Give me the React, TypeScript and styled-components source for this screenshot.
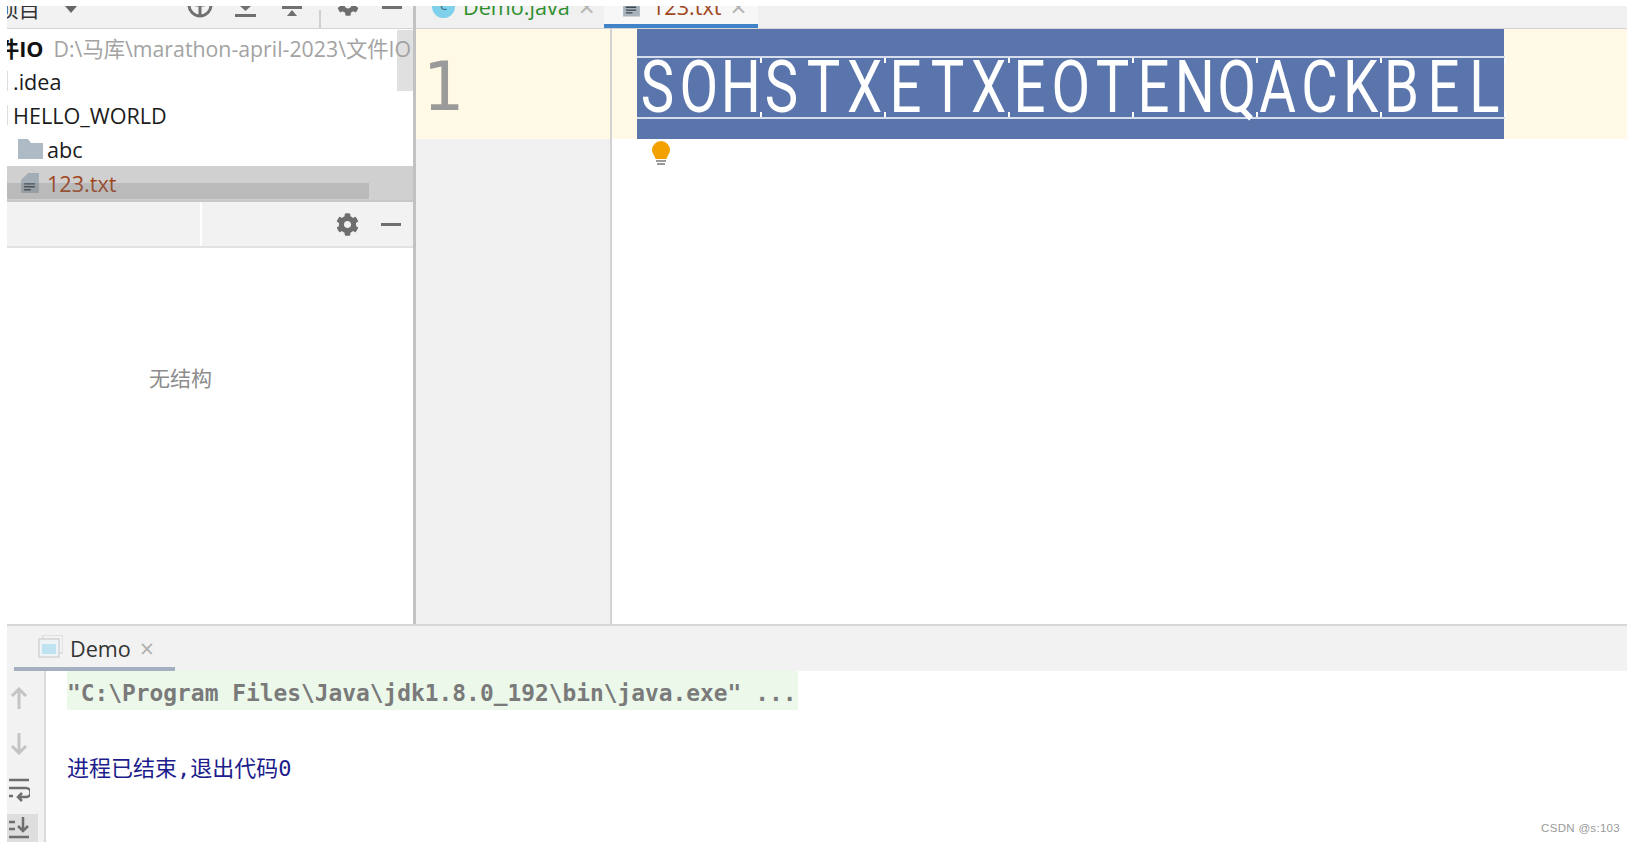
import React from "react";
import styled, { createGlobalStyle } from "styled-components";
import { FaCog } from "react-icons/fa";

const Global = createGlobalStyle`
  html, body { margin: 0; padding: 0; background: #fff; }
  #root { width: 1627px; height: 842px; overflow: hidden; }
`;
const UI = `"Open Sans", "Noto Sans", "Noto Sans CJK SC", sans-serif`;
const Page = styled.div`
  position: relative; box-sizing: border-box; width: 1627px; height: 842px; padding: 6px 0 0 7px;
  display: flex; flex-direction: column; overflow: hidden; background: #fff; font-family: ${UI};
`;
const Top = styled.div`display: flex; height: 618px; flex: none;`;
const Sidebar = styled.aside`position: relative; width: 406px; flex: none; display: flex; flex-direction: column; overflow: hidden;`;
const Splitter = styled.div`width: 3px; flex: none; background: #c2c2c2;`;
const ProjectBar = styled.div`
  height: 23px; flex: none; box-sizing: border-box; background: #f2f2f2; border-bottom: 1px solid #d4d4d4;
  display: flex; align-items: flex-end; overflow: hidden; position: relative; color: #555;
`;
const ProjectTitle = styled.span`font-size: 21.6px; line-height: 26px; margin: 0 0 6px -10px; color: #333; white-space: nowrap;`;
const Caret = styled.span`width:0;height:0;border-left:6px solid transparent;border-right:6px solid transparent;border-top:7px solid #666;margin:0 0 15px 25px;`;
const BarIcons = styled.div`position: absolute; right: 0; bottom: 0; left: 0; height: 22px;`;
const BarIcon = styled.svg<{ $x: number; $b: number }>`position: absolute; left: ${p => p.$x}px; bottom: ${p => p.$b}px; overflow: visible;`;
const BarCog = styled(FaCog)`position: absolute; left: 330px; bottom: 12px;`;
const Tree = styled.div`display: flex; flex-direction: column; position: relative; padding-top: 1px; flex: none;`;
const Row = styled.div<{ $sel?: boolean }>`
  height: 34px; flex: none; display: flex; align-items: center; font-size: 21.6px; white-space: nowrap; color: #1b1b1b;
  background: ${p => (p.$sel ? "#d0d0d0" : "#fff")};
`;
const RootName = styled.b`margin-left: -31px; color: #111; margin-right: 10px;`;
const PathText = styled.span`position: relative; z-index: 1; color: #a3a3a3; font-size: 21.3px;`;
const Tick = styled.span`width: 1px; height: 20px; background: #ddd; margin-right: 5px;`;
const FolderIcon = styled.svg`margin: 0 4px 0 11px; flex: none;`;
const FileSlot = styled.span`display: flex; margin: 0 8px 0 14px; flex: none;`;
const Changed = styled.span`color: #a0461e;`;
const VScroll = styled.div`position: absolute; right: 0; top: 1px; width: 16px; height: 61px; background: #e0e0e0;`;
const HScroll = styled.div`position: absolute; left: 0; top: 154px; width: 362px; height: 16px; background: rgba(120,120,120,.25);`;
const ToolHeader = styled.div`
  height: 48px; flex: none; box-sizing: border-box; background: #f2f2f2; border-top: 2px solid #c8c8c8; border-bottom: 2px solid #e2e2e2;
  display: flex; align-items: center; justify-content: flex-end; padding-right: 12px; gap: 22px; color: #666;
`;
const Divider = styled.span`width: 2px; align-self: stretch; background: #fff; margin-right: 112px;`;
const Minus = styled.span`width: 20px; height: 3px; background: #6e6e6e;`;
const Empty = styled.div`padding: 116px 0 0 142px; font-size: 21px; line-height: 28px; color: #8c8c8c;`;
const Editor = styled.main`flex: 1; display: flex; flex-direction: column; min-width: 0;`;
const EditorTabs = styled.div`
  height: 23px; flex: none; box-sizing: border-box; background: #f0f0f0; border-bottom: 1px solid #d4d4d4; display: flex; align-items: stretch; overflow: hidden; padding-left: 16px;
`;
const EditorTab = styled.div<{ $active?: boolean }>`
  display: flex; align-items: flex-end; overflow: hidden; box-sizing: border-box; font-size: 21.6px; white-space: nowrap;
  width: ${p => (p.$active ? "154px" : "172px")};
  padding-left: ${p => (p.$active ? "19px" : "0")};
  background: ${p => (p.$active ? "#f7f7f7" : "transparent")};
  border-bottom: ${p => (p.$active ? "5px solid #4083c9" : "0")};
  height: ${p => (p.$active ? "23px" : "22px")};
`;
const TabLabel = styled.span<{ $color: string; $drop: number; $gap: number }>`
  color: ${p => p.$color}; line-height: 26px; margin: 0 0 ${p => p.$drop}px ${p => p.$gap}px;
`;
const TabClose = styled.span<{ $drop: number }>`color: #b5b5b5; font-size: 28px; line-height: 28px; margin: 0 0 ${p => p.$drop}px 9px;`;
const ClassBadge = styled.span`
  width: 23px; height: 23px; border-radius: 50%; background: #7fd0ea; color: #3a6f80; font-size: 15px; line-height: 19px; text-align: center; margin: 0 0 10px 0; flex: none;
`;
const TabDoc = styled.span`display: flex; margin-bottom: 7px; flex: none;`;
const EditorBody = styled.div`flex: 1; display: flex; min-height: 0;`;
const Gutter = styled.div`width: 194px; flex: none; background: #f0f0f0; border-right: 2px solid #d2d2d2; box-sizing: content-box;`;
const GutterLine = styled.div`
  height: 110px; box-sizing: border-box; background: #fff9e5; display: flex; align-items: center; padding: 4px 0 0 6px;
  font-family: "DejaVu Sans Mono", monospace; font-size: 68px; color: #9a9a9a;
`;
const Content = styled.div`flex: 1; display: flex; flex-direction: column; align-items: stretch; position: relative;`;
const Line = styled.div`height: 110px; background: #fff9e5; padding-left: 25px; flex: none;`;
const Selection = styled.div`width: 867px; height: 110px; background: #5a75ab; display: flex; align-items: center;`;
const Group = styled.span`
  position: relative; width: 124px; height: 63px; box-sizing: border-box; flex: none; display: flex;
  border-top: 2px solid #d5dcec; border-bottom: 2px solid #d5dcec; margin-top: 7px;
  &::before, &::after { content: ""; position: absolute; right: -1px; width: 2px; height: 5px; background: #fff; }
  &::before { top: 0; }
  &::after { bottom: 0; }
`;
const Cell = styled.span`width: 41.33px; flex: none; display: flex; justify-content: center; align-items: center;`;
const Glyph = styled.span`
  font-family: Roboto, sans-serif; font-weight: 400; font-size: 72px; line-height: 54px; color: #fff; transform: scaleX(.78); display: inline-block;
`;
const Bulb = styled.svg`position: absolute; left: 40px; top: 112px;`;
const Bottom = styled.section`flex: 1; display: flex; flex-direction: column; border-top: 2px solid #d6d6d6; min-height: 0;`;
const ConsoleTabs = styled.div`height: 45px; flex: none; background: #f2f2f2; display: flex; align-items: stretch; padding-left: 7px;`;
const ConsoleTab = styled.div`
  width: 161px; box-sizing: border-box; border-bottom: 4px solid #a4afc0; display: flex; align-items: center; padding: 3px 0 0 24px; font-size: 21.6px; color: #333;
`;
const TabIcon = styled.svg`margin: -3px 7px 0 0;`;
const TabClear = styled.span`color: #b0b0b0; margin-left: 9px; font-size: 25px; line-height: 26px;`;
const ConsoleBody = styled.div`flex: 1; display: flex; min-height: 0;`;
const ConsoleSide = styled.div`
  width: 37px; flex: none; background: #f2f2f2; border-right: 2px solid #dcdcdc; display: flex; flex-direction: column; align-items: flex-start; padding-top: 4px;
`;
const SideBtn = styled.div<{ $on?: boolean; $h: number }>`
  width: 31px; height: ${p => p.$h}px; flex: none; box-sizing: border-box; padding-right: 7px; display: flex; align-items: center; justify-content: center;
  background: ${p => (p.$on ? "#dedede" : "transparent")};
`;
const Output = styled.div`flex: 1; padding-left: 21px; font-family: "DejaVu Sans Mono", "Noto Sans CJK SC", monospace;`;
const CmdLine = styled.div`
  width: 731px; height: 39px; background: #ebf8ea; color: #7a7a7a; font-weight: 700; font-size: 22.86px; line-height: 45px; white-space: pre; overflow: hidden;
`;
const ExitLine = styled.div`margin-top: 39px; color: #1c1c8c; font-size: 22px; line-height: 40px; white-space: pre;`;
const Watermark = styled.div`position: absolute; right: 7px; bottom: 8px; font-family: "Liberation Sans", sans-serif; font-size: 11.5px; color: #9a9a9a; letter-spacing: .3px;`;

const groups = ["SOH", "STX", "ETX", "EOT", "ENQ", "ACK", "BEL"];

const DocIcon = ({ size = 18 }: { size?: number }) => (
  <svg width={size} height={size * 1.15} viewBox="0 0 18 21">
    <path d="M7 0h11v21H0V7z" fill="#9aa7b0" opacity=".85" />
    <path d="M3 11h11M3 14h11M3 17h7" stroke="#3d4950" strokeWidth="1.4" />
  </svg>
);

export default function App() {
  return (
    <Page>
      <Global />
      <Top>
        <Sidebar>
          <ProjectBar>
            <ProjectTitle>项目</ProjectTitle>
            <Caret />
            <BarIcons>
              <BarIcon $x={180} $b={8} width="26" height="18" viewBox="0 0 26 18" fill="none" stroke="#707070" strokeWidth="3">
                <circle cx="13" cy="3" r="11" />
                <path d="M13 3v11M4 1c4 3 14 3 18 0" />
              </BarIcon>
              <BarIcon $x={228} $b={10} width="21" height="12" viewBox="0 0 21 12" fill="#707070">
                <path d="M5 0h11l-5.500 5z" />
                <rect y="8" width="21" height="3" />
              </BarIcon>
              <BarIcon $x={275} $b={8} width="20" height="14" viewBox="0 0 20 14" fill="#707070">
                <path d="M5 10h10l-5-6z" />
                <rect y="0" width="20" height="3" />
              </BarIcon>
              <BarIcon $x={312} $b={0} width="2" height="18" viewBox="0 0 2 18" fill="#d0d0d0"><rect width="2" height="18" /></BarIcon>
              <BarCog size={22} color="#6e6e6e" />
              <BarIcon $x={375} $b={19} width="20" height="3" viewBox="0 0 20 3" fill="#707070"><rect width="20" height="3" /></BarIcon>
            </BarIcons>
          </ProjectBar>
          <Tree>
            <Row><RootName>文件IO</RootName><PathText>D:\马库\marathon-april-2023\文件IO</PathText></Row>
            <Row><Tick />.idea</Row>
            <Row><Tick />HELLO_WORLD</Row>
            <Row>
              <FolderIcon width="25" height="20" viewBox="0 0 25 20"><path d="M0 0h10l3 4h12v16H0z" fill="#aebbc5" /></FolderIcon>
              abc
            </Row>
            <Row $sel><FileSlot><DocIcon /></FileSlot><Changed>123.txt</Changed></Row>
            <VScroll />
            <HScroll />
          </Tree>
          <ToolHeader>
            <Divider />
            <FaCog size={23} color="#6e6e6e" />
            <Minus />
          </ToolHeader>
          <Empty>无结构</Empty>
        </Sidebar>
        <Splitter />
        <Editor>
          <EditorTabs>
            <EditorTab>
              <ClassBadge>c</ClassBadge>
              <TabLabel $color="#2d8f2d" $drop={8} $gap={8}>Demo.java</TabLabel>
              <TabClose $drop={8}>×</TabClose>
            </EditorTab>
            <EditorTab $active>
              <TabDoc><DocIcon size={17} /></TabDoc>
              <TabLabel $color="#a0461e" $drop={4} $gap={12}>123.txt</TabLabel>
              <TabClose $drop={4}>×</TabClose>
            </EditorTab>
          </EditorTabs>
          <EditorBody>
            <Gutter><GutterLine>1</GutterLine></Gutter>
            <Content>
              <Line>
                <Selection>
                  {groups.map(g => (
                    <Group key={g}>
                      {g.split("").map((c, i) => (
                        <Cell key={i}><Glyph>{c}</Glyph></Cell>
                      ))}
                    </Group>
                  ))}
                </Selection>
              </Line>
              <Bulb width="18" height="26" viewBox="0 0 18 26">
                <path d="M9 0a9 9 0 0 1 9 9c0 3.500-2.500 5-3.500 9h-11C2.500 14 0 12.500 0 9a9 9 0 0 1 9-9z" fill="#f2a100" />
                <path d="M4 20h10M5 23h8" stroke="#9a9a9a" strokeWidth="2" />
              </Bulb>
            </Content>
          </EditorBody>
        </Editor>
      </Top>
      <Bottom>
        <ConsoleTabs>
          <ConsoleTab>
            <TabIcon width="25" height="23" viewBox="0 0 25 23">
              <rect x="5" y="0" width="20" height="18" fill="none" stroke="#dcdcdc" strokeWidth="1.500" />
              <rect x="1" y="4" width="20" height="18" fill="#eef3f6" stroke="#d4d4d4" strokeWidth="1.500" />
              <rect x="4" y="9" width="14" height="10" fill="#bfe3f0" />
            </TabIcon>
            Demo<TabClear>×</TabClear>
          </ConsoleTab>
        </ConsoleTabs>
        <ConsoleBody>
          <ConsoleSide>
            <SideBtn $h={46}>
              <svg width="18" height="22" viewBox="0 0 18 22" fill="none" stroke="#c4c4c4" strokeWidth="3"><path d="M9 22V2M2 9l7-7 7 7" /></svg>
            </SideBtn>
            <SideBtn $h={45}>
              <svg width="18" height="22" viewBox="0 0 18 22" fill="none" stroke="#c4c4c4" strokeWidth="3"><path d="M9 0v20M2 13l7 7 7-7" /></svg>
            </SideBtn>
            <SideBtn $h={48}>
              <svg width="22" height="24" viewBox="0 0 22 24" fill="none" stroke="#6e6e6e" strokeWidth="2.500"><path d="M1 2h20M1 10h17a3 3 0 0 1 0 9h-7M14 15l-4 4 4 4M1 18h4" /></svg>
            </SideBtn>
            <SideBtn $h={28} $on>
              <svg width="22" height="24" viewBox="0 0 22 24" fill="none" stroke="#6e6e6e" strokeWidth="2.500"><path d="M1 6h6M1 13h6M15 1v14M10 10l5 5 5-5M1 21h20" /></svg>
            </SideBtn>
          </ConsoleSide>
          <Output>
            <CmdLine>{`"C:\\Program Files\\Java\\jdk1.8.0_192\\bin\\java.exe" ...`}</CmdLine>
            <ExitLine>进程已结束,退出代码0</ExitLine>
          </Output>
        </ConsoleBody>
      </Bottom>
      <Watermark>CSDN @s:103</Watermark>
    </Page>
  );
}
